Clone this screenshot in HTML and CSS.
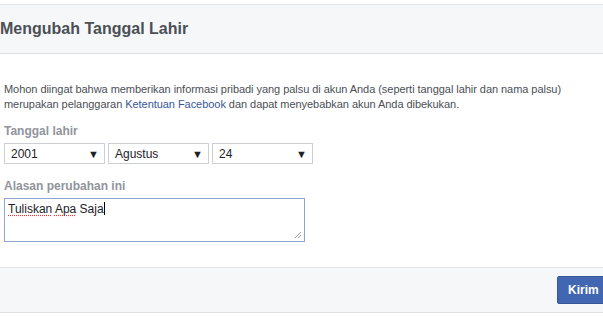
FILE: index.html
```html
<!DOCTYPE html>
<html>

<head>
    <meta charset="UTF-8">
    <title>Mengubah Tanggal Lahir</title>
    <link rel="stylesheet" href="styles.css">
</head>

<body>
    <div class="dialog">
        <div class="header">
            <h2>Mengubah Tanggal Lahir</h2>
        </div>
        <div class="content">
            <p class="info">Mohon diingat bahwa memberikan informasi pribadi yang palsu di akun Anda (seperti tanggal lahir dan nama palsu)<br>merupakan pelanggaran <a href="#">Ketentuan Facebook</a> dan dapat menyebabkan akun Anda dibekukan.</p>
            <div class="label">Tanggal lahir</div>
            <div class="selects">
                <div class="select"><span>2001</span><span class="arrow">&#9660;</span></div>
                <div class="select"><span>Agustus</span><span class="arrow">&#9660;</span></div>
                <div class="select"><span>24</span><span class="arrow">&#9660;</span></div>
            </div>
            <div class="label">Alasan perubahan ini</div>
            <div class="textarea">
                <span class="spell">Tuliskan</span> <span class="spell">Apa</span> Saja<span class="caret"></span>
                <svg class="grip" width="9" height="9" viewBox="0 0 9 9">
                    <line x1="8" y1="2" x2="2" y2="8" stroke="#999" stroke-width="1" />
                    <line x1="8" y1="5" x2="5" y2="8" stroke="#999" stroke-width="1" />
                </svg>
            </div>
        </div>
        <div class="footer">
            <button type="button" class="send">Kirim</button>
        </div>
    </div>
</body>

</html>
```
FILE: styles.css
```css
body {
    margin: 0;
    background: #fff;
    font-family: "Liberation Sans", Arial, sans-serif;
    font-size: 12px;
    color: #4b4f56;
}

.dialog {
    padding-top: 4px;
}

.header {
    background-color: #f6f7f9;
    border-top: 1px solid #e5e5e5;
    border-bottom: 1px solid #dddfe2;
    height: 48px;
    display: flex;
    align-items: center;
}

.header h2 {
    margin: 0;
    font-size: 16px;
    font-weight: bold;
    color: #4b4f56;
}

.content {
    padding: 28px 4px 25px 4px;
}

.info {
    margin: 0 0 12px 0;
    font-size: 11px;
    letter-spacing: -0.05px;
    line-height: 15px;
    white-space: nowrap;
    color: #4b4f56;
}

.info a {
    color: #365899;
    text-decoration: none;
}

.label {
    font-weight: bold;
    color: #90949c;
    line-height: 15px;
    margin-bottom: 4px;
}

.selects {
    display: flex;
    gap: 3px;
    margin-bottom: 15px;
}

.select {
    box-sizing: border-box;
    width: 101px;
    height: 21px;
    border: 1px solid #ccd0d5;
    display: flex;
    align-items: center;
    justify-content: space-between;
    padding: 0 5px 0 6px;
    color: #1d2129;
}

.select .arrow {
    font-size: 11px;
    color: #1d2129;
}

.textarea {
    position: relative;
    box-sizing: border-box;
    width: 301px;
    height: 44px;
    border: 1px solid #8ea5cf;
    padding: 3px 3px;
    color: #1d2129;
    line-height: 14px;
}

.spell {
    text-decoration: underline dotted #e0393e;
    text-underline-offset: 2px;
}

.caret {
    display: inline-block;
    width: 1px;
    height: 13px;
    background: #000;
    vertical-align: -2px;
}

.grip {
    position: absolute;
    right: 2px;
    bottom: 2px;
}

.footer {
    background-color: #f6f7f9;
    border-top: 1px solid #e5e5e5;
    border-bottom: 1px solid #dddfe2;
    height: 44px;
    display: flex;
    align-items: center;
    justify-content: flex-end;
}

.send {
    box-sizing: border-box;
    height: 28px;
    width: 52px;
    margin-right: -6px;
    background-color: #4267b2;
    border: 1px solid #365899;
    border-radius: 2px;
    color: #fff;
    font-family: "Liberation Sans", Arial, sans-serif;
    font-size: 12px;
    font-weight: bold;
    padding: 0 0 0 10px;
    text-align: left;
}
```
